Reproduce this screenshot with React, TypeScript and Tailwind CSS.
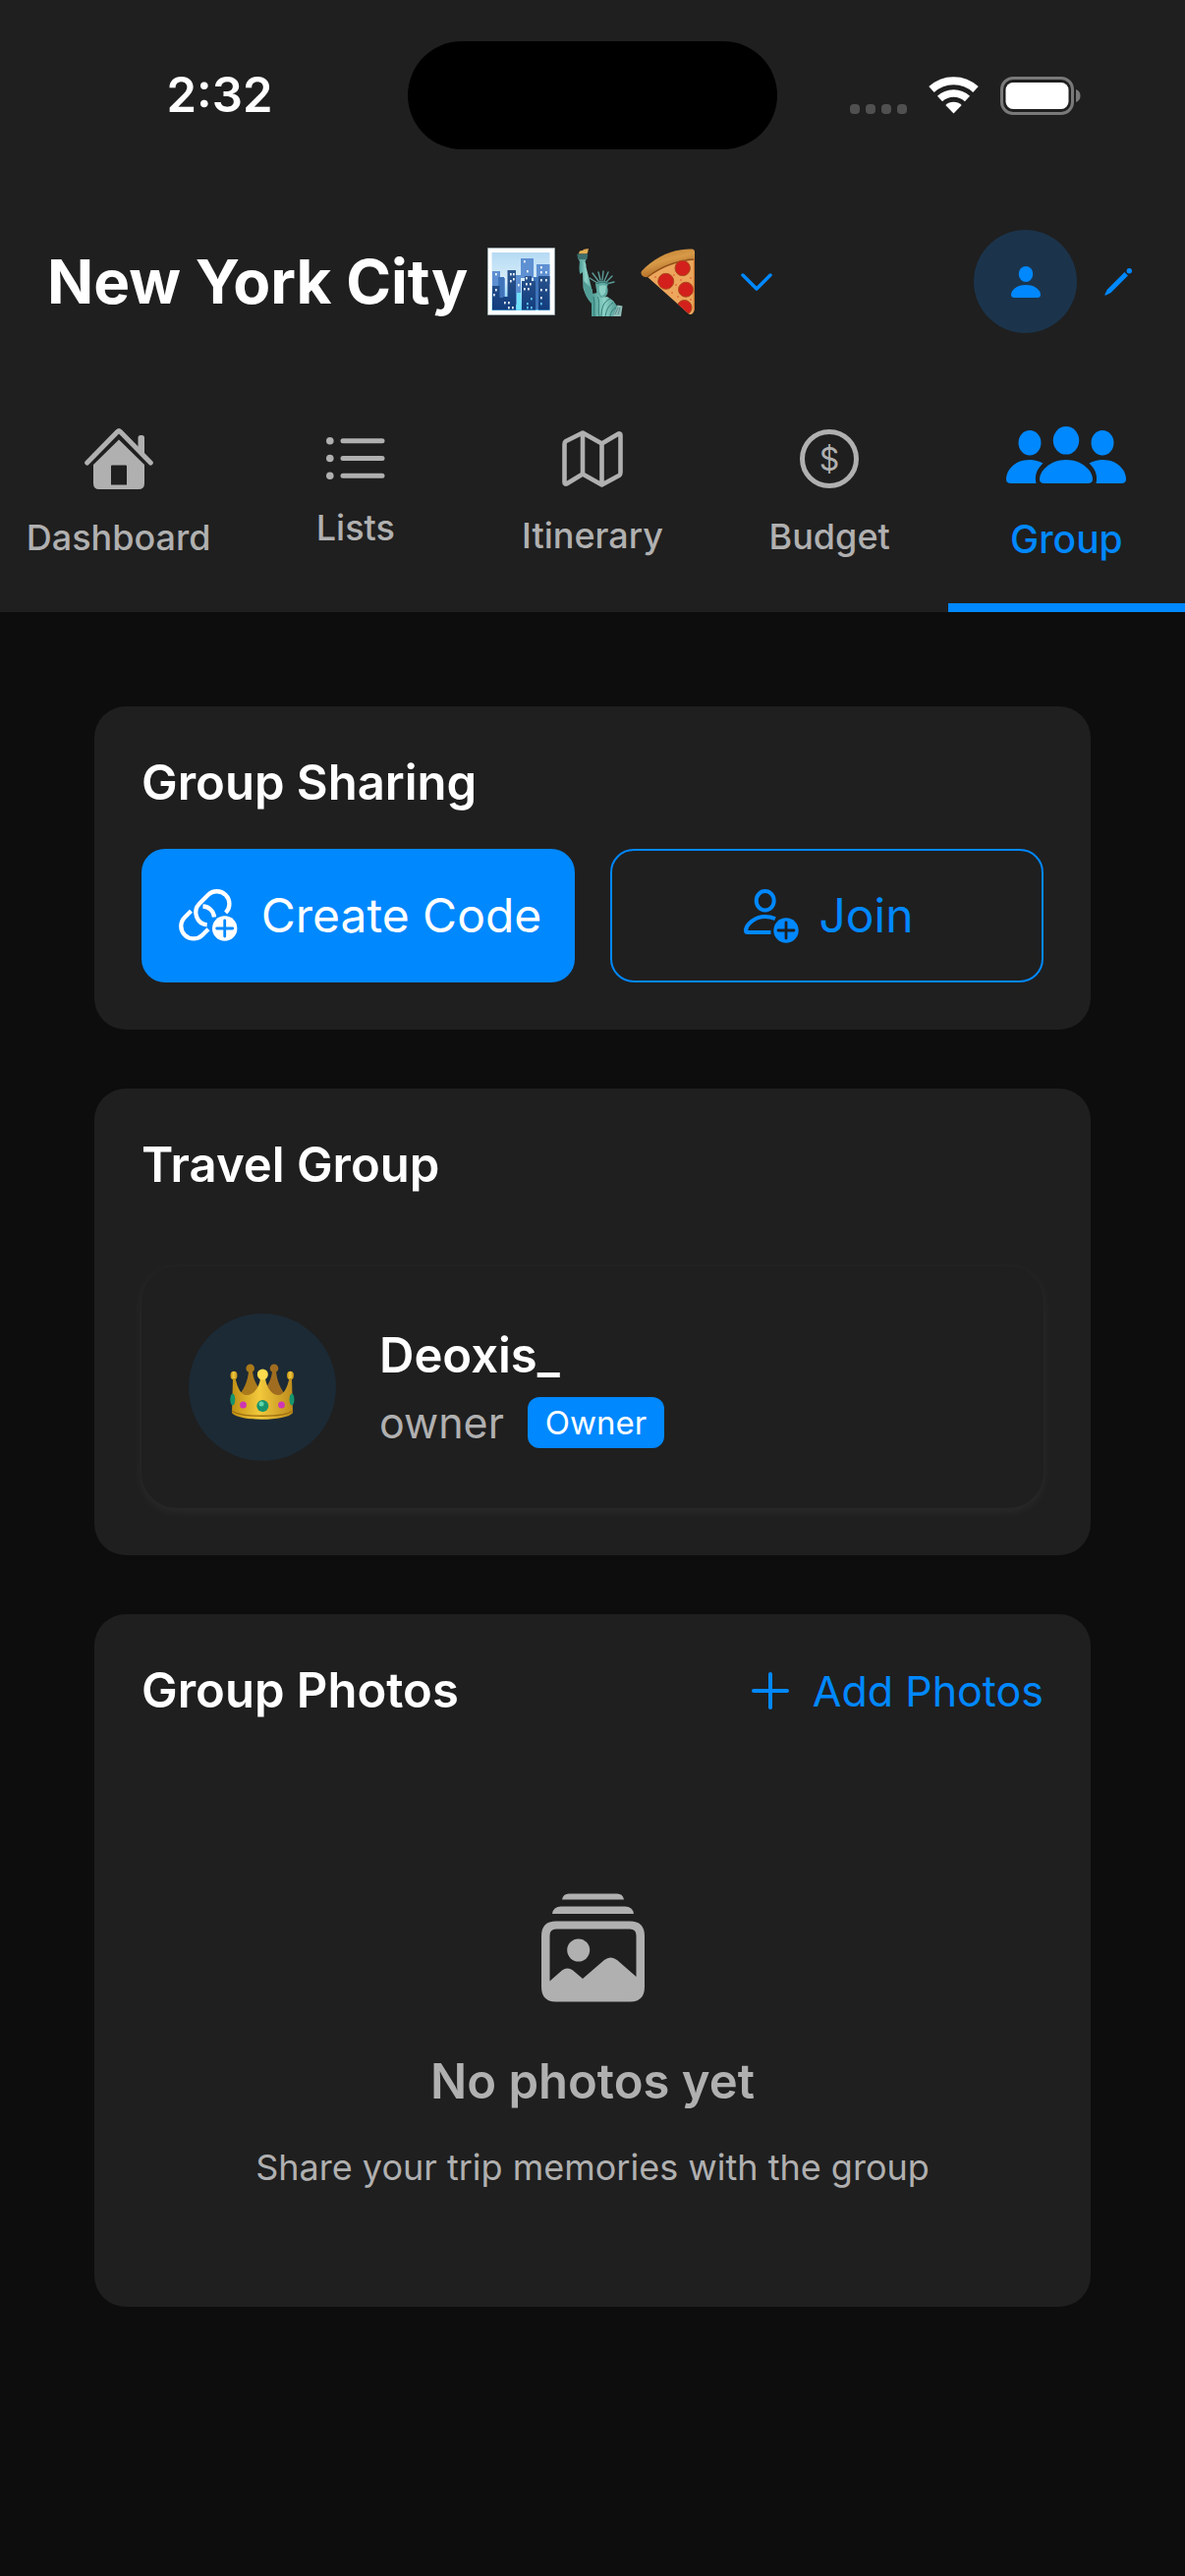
import type { ReactNode } from 'react';

const tabs = [
  { label: 'Dashboard', icon: <HouseIcon /> },
  { label: 'Lists', icon: <ListIcon /> },
  { label: 'Itinerary', icon: <MapIcon /> },
  { label: 'Budget', icon: <DollarIcon /> },
  { label: 'Group', icon: <GroupIcon />, active: true },
];

/* ---------- Status bar icons ---------- */

function WifiIcon() {
  return (
    <svg width="51" height="38" viewBox="0 0 51 38" fill="none" stroke="#fff" aria-hidden="true">
      <path d="M3 13a33 33 0 0 1 45 0" strokeWidth="8" />
      <path d="M11.5 22.5a20.5 20.5 0 0 1 28 0" strokeWidth="7.5" />
      <path d="M25.5 37.5 17.3 29a12 12 0 0 1 16.4 0Z" fill="#fff" stroke="none" />
    </svg>
  );
}

function BatteryIcon() {
  return (
    <svg width="82" height="39" viewBox="0 0 82 39" fill="none" aria-hidden="true">
      <rect x="1.5" y="1.5" width="72" height="36" rx="11.5" stroke="#797979" strokeWidth="3" />
      <rect x="5.5" y="6" width="64" height="27" rx="7.5" fill="#fff" />
      <path d="M77 13c3 1 4.5 3.5 4.5 6.5S80 25 77 26Z" fill="#797979" />
    </svg>
  );
}

/* ---------- Emoji drawings ---------- */

function CityEmoji() {
  const windows = [
    [37, 13], [40, 23], [54, 19], [59, 24], [54, 24], [23, 26], [26, 26], [23, 33], [26, 31],
    [8, 26], [8, 42], [6, 47], [31, 37], [39, 30], [39, 36], [43, 36], [37, 41], [41, 41],
    [54, 32], [59, 32], [54, 42], [59, 42], [54, 50], [54, 56], [44, 51], [40, 56], [17, 55],
    [21, 55], [21, 60], [25, 60], [40, 60], [44, 60],
  ];
  return (
    <svg width="69" height="69" viewBox="0 0 69 69" role="img" aria-label="cityscape">
      <defs>
        <linearGradient id="sky" x1="0" y1="0" x2="0" y2="1">
          <stop offset="0" stopColor="#b5daf3" />
          <stop offset="0.5" stopColor="#d8eefb" />
          <stop offset="1" stopColor="#5cc6f2" />
        </linearGradient>
        <linearGradient id="tower" x1="0" y1="0" x2="0" y2="1">
          <stop offset="0" stopColor="#2c568f" />
          <stop offset="1" stopColor="#123c7c" />
        </linearGradient>
      </defs>
      <rect width="69" height="69" fill="#6f8388" />
      <rect x="0.7" y="0.7" width="67.6" height="67.6" fill="#fff" />
      <rect x="4.5" y="5" width="59" height="59" fill="url(#sky)" />
      <path d="M5 24h8v7h5v20h-13zM34 11h13v20H34zM50 17h13.5v20H50zM29 28h5v30h-5z" fill="#5e90d2" />
      <path d="M11 30h6v30h-6zM47 30h5v33h-5z" fill="#3f74ba" />
      <path d="M5 39h7.500v12H16v-1h4.500V23H29v40.500H5zM35 34h3v-5h7v5h4v29.500H35zM52 29h11.500v34.500H52z" fill="url(#tower)" />
      <rect x="30" y="46" width="4" height="17.5" fill="#6fe0fb" />
      {windows.map(([x, y]) => (
        <rect key={`${x}-${y}`} x={x} y={y} width="1.7" height="2.4" fill={y > 50 && x % 2 === 0 ? '#5cc3f5' : '#eef7ff'} />
      ))}
    </svg>
  );
}

function StatueEmoji() {
  return (
    <svg width="71" height="70" viewBox="0 0 71 70" role="img" aria-label="Statue of Liberty">
      <defs>
        <linearGradient id="robe" x1="0" y1="0" x2="1" y2="0">
          <stop offset="0" stopColor="#4b9a92" />
          <stop offset="0.45" stopColor="#8ed3c8" />
          <stop offset="1" stopColor="#438d87" />
        </linearGradient>
      </defs>
      <path d="M16 6.500c0-3 2-4 4-3.500 1-2 3-1 6-2-1 2 0 4-2 5.500Z" fill="#e0ad52" />
      <path d="M14.300 6.500h11l-.8 5.500h-9.400Z" fill="#3d6f6e" />
      <path d="M16 12h7.500l-1 3h-5.500Z" fill="#68aaa3" />
      <path d="M17 14c4-2 7 1 6.500 6L27 33l3 12c1 5 3 10 0 12-5-4-8-11-9.500-16L20 25l-2.500 2c-1.500-3-1-9-.5-13Z" fill="url(#robe)" />
      <path d="M21 34c3 3 6 5 9 9l-1 14c-4-4-9-12-8-23Z" fill="#529d95" />
      <g stroke="#5c9c98" strokeWidth="1.4" strokeLinecap="round">
        <path d="M35 36 27 31M36 34l-6-8M38 33l-2-8M40 33l1-9M42 34l4-9M44 35l6-6M44 37l8-2" />
      </g>
      <path d="M33 37c1-3 9-5 13-1l-1 4c2 6-1 11-5 12-4-1-6-4-6-9Z" fill="#5fa9a1" />
      <path d="M37 39c3-1 5-1 7 0l-1 7c-1 2-3 3-4 3-2-3-3-6-2-10Z" fill="#8bcfc4" />
      <path d="M34 37c3-2 8-3 12 0" stroke="#3b7775" strokeWidth="1.5" fill="none" />
      <path d="M29 70V57l1-10 5-1 3 5 7-1 6 4 5 7 2 9Z" fill="url(#robe)" />
      <path d="M31 50c2 8 0 14 1 20M35 50c3 4 0 14 2 20M48 52c-7 3-9 10-9 18M51 56c-6 4-7 9-8 14M54 61c-4 2-6 6-6 9" stroke="#337b77" strokeWidth="1" fill="none" />
      <path d="m51 70 4.500-11.500 5 1L59 70Z" fill="#8fbdb8" />
      <path d="m53 68 3-7M56 68l2-7" stroke="#5b8e8b" strokeWidth="1" />
    </svg>
  );
}

function PizzaEmoji() {
  return (
    <svg width="57" height="69" viewBox="0 0 57 69" role="img" aria-label="pizza">
      <defs>
        <linearGradient id="crust" x1="0" y1="0" x2="0.5" y2="1">
          <stop offset="0" stopColor="#b9742a" />
          <stop offset="0.5" stopColor="#d79a48" />
          <stop offset="1" stopColor="#a9601d" />
        </linearGradient>
        <clipPath id="slice">
          <path d="M6 29C19 18 35 12 55 11v50q-1 9-6 6.500Z" />
        </clipPath>
      </defs>
      <path d="M6 29C19 18 35 12 55 11v50q-1 9-6 6.500Z" fill="#eca75d" />
      <path d="M1 24C14 10 32 1 52 1.500q3 0 3 3V11C36 12 20 20 7 30 3 31-1 27 1 24Z" fill="url(#crust)" />
      <path d="M7 30C20 20 36 13 55 12" stroke="#8f4f18" strokeWidth="1.5" fill="none" />
      <g clipPath="url(#slice)">
        <g fill="#d3201c" stroke="#a94a1c" strokeWidth="1">
          <circle cx="42.7" cy="21" r="7.7" />
          <circle cx="25.7" cy="34.3" r="8" />
          <circle cx="46" cy="42.7" r="7.5" />
          <circle cx="44.5" cy="61" r="7.5" />
        </g>
        <g fill="#e2703c">
          <circle cx="34" cy="28" r="1" />
          <circle cx="36" cy="38" r="1" />
          <circle cx="32" cy="46" r="1" />
          <circle cx="51" cy="31" r="1" />
          <circle cx="41" cy="33" r="1" />
          <circle cx="15" cy="30" r="1" />
          <circle cx="51" cy="53" r="1" />
          <circle cx="38" cy="50" r="1" />
        </g>
        <path d="M54.500 11v57" stroke="#c9762f" strokeWidth="1.5" />
      </g>
    </svg>
  );
}

function CrownEmoji() {
  return (
    <svg width="66" height="57" viewBox="0 0 66 57" role="img" aria-label="crown">
      <defs>
        <linearGradient id="gold" x1="0" y1="0" x2="1" y2="0">
          <stop offset="0" stopColor="#c08f14" />
          <stop offset="0.45" stopColor="#f3c93c" />
          <stop offset="1" stopColor="#bd8b1c" />
        </linearGradient>
      </defs>
      <g fill="#ab7a1b">
        <circle cx="20.7" cy="4.7" r="4.3" />
        <path d="M19 8h4c1 8 4 14 8 18l-8 14-16-6C14 28 18 18 19 8Z" />
      </g>
      <g fill="#a06d20">
        <circle cx="45" cy="4.7" r="4.3" />
        <path d="M43 8h4c1 10 5 20 12 26l-16 6-8-14c4-4 7-10 8-18Z" />
      </g>
      <g fill="url(#gold)">
        <ellipse cx="4" cy="12" rx="3.5" ry="4.2" />
        <ellipse cx="61.5" cy="12" rx="3.5" ry="4.2" />
        <path d="M3 15h2.500C8 25 11 32 17 32c8 0 13-9 14-17h5c1 8 6 17 13 17 6 0 9-7 11.500-17H63l1 35c-6 9-56 9-62 0Z" />
      </g>
      <circle cx="33.3" cy="11" r="5.5" fill="#ffdc4e" />
      <path d="M2 48c8 7 54 7 62 0" stroke="#9d7010" strokeWidth="1.3" fill="none" />
      <circle cx="33.3" cy="43" r="6" fill="#17946c" />
      <circle cx="32" cy="41" r="2.5" fill="#5fd6ac" />
      <ellipse cx="13.5" cy="42" rx="3.4" ry="3.6" fill="#cf35b4" />
      <ellipse cx="52.5" cy="42" rx="3.4" ry="3.6" fill="#cf35b4" />
      <ellipse cx="2.8" cy="36.5" rx="2.5" ry="6" fill="#17946c" />
      <ellipse cx="63" cy="36.5" rx="2.5" ry="6" fill="#17946c" />
    </svg>
  );
}

/* ---------- Tab icons ---------- */

function HouseIcon() {
  return (
    <svg width="70" height="62" viewBox="0 0 70 62" fill="currentColor" aria-hidden="true">
      <path d="M54.500 24V9.500q0-2.500 2.500-2.500h1.500Q61 7 61 9.500V28Z" />
      <path d="M2.700 35 33.500 3.500q1.500-1.500 3 0L67.300 35" fill="none" stroke="currentColor" strokeWidth="5" strokeLinecap="round" />
      <path fillRule="evenodd" d="M35 11.500 61 37v19q0 6-6 6H15q-6 0-6-6V37ZM28 37.500q-1 0-1 1V57.500h16V38.500q0-1-1-1Z" />
    </svg>
  );
}

function ListIcon() {
  return (
    <svg width="60" height="43" viewBox="0 0 60 43" fill="currentColor" aria-hidden="true">
      <circle cx="3.8" cy="3.8" r="3.8" />
      <circle cx="3.8" cy="21.5" r="3.8" />
      <circle cx="3.8" cy="39.2" r="3.8" />
      <path d="M17 3.800h40M17 21.500h40M17 39.200h40" stroke="currentColor" strokeWidth="5" strokeLinecap="round" />
    </svg>
  );
}

function MapIcon() {
  return (
    <svg width="62" height="58" viewBox="0 0 62 58" fill="none" stroke="currentColor" strokeWidth="4.6" strokeLinejoin="round" aria-hidden="true">
      <path d="M2.500 14q0-2 1.500-3L21 2.500 40.500 13.500 57 3.700q2.500-1 2.500 1.300v38q0 2-1.500 3L40.500 55.500 21 44.500 5 54.300q-2.500 1-2.500-1.300ZM21 2.500v42M40.500 13.500v42" />
    </svg>
  );
}

function DollarIcon() {
  return (
    <svg width="60" height="60" viewBox="0 0 60 60" aria-hidden="true">
      <circle cx="30" cy="30" r="27.5" fill="none" stroke="currentColor" strokeWidth="5" />
      <text x="30" y="41.5" textAnchor="middle" fontSize="32" fill="currentColor">$</text>
    </svg>
  );
}

function GroupIcon() {
  return (
    <svg width="122" height="66" viewBox="0 0 122 66" fill="currentColor" aria-hidden="true">
      <ellipse cx="61" cy="14.3" rx="13.2" ry="14.3" />
      <ellipse cx="24" cy="16.7" rx="11.5" ry="12.7" />
      <ellipse cx="98" cy="16.7" rx="11.5" ry="12.7" />
      <path d="M39 58q-5 0-5-4c0-9 11-20 27-20s27 11 27 20q0 4-5 4Z" />
      <path d="M5 58q-5 0-5-4c0-9 8-20 24-20 5 0 9 1.300 13.500 3.500C31.500 43 28.500 50 30.500 58Z" />
      <path d="M117 58q5 0 5-4c0-9-8-20-24-20-5 0-9 1.300-13.500 3.500C90.500 43 93.500 50 91.500 58Z" />
    </svg>
  );
}

/* ---------- Action icons ---------- */

function LinkPlusIcon() {
  return (
    <svg width="60" height="54" viewBox="0 0 60 54" fill="none" stroke="currentColor" strokeWidth="4.3" aria-hidden="true">
      <path d="M47.700 24A12.700 12.700 0 0 0 29.700 6L21 14.700A12.700 12.700 0 0 0 28.700 36.300" />
      <path d="M12.500 22.200 6 28.700A12.700 12.700 0 0 0 24 46.700l6-6" />
      <path d="M24.500 17.500A12 12 0 0 1 36 28.500" />
      <circle cx="46.7" cy="40" r="12.7" fill="currentColor" stroke="none" />
      <path d="M46.700 32v16M38.700 40h16" stroke="#0088ff" strokeWidth="2.8" strokeLinecap="round" />
    </svg>
  );
}

function PersonPlusIcon() {
  return (
    <svg width="56" height="55" viewBox="0 0 56 55" fill="none" stroke="currentColor" strokeWidth="4" aria-hidden="true">
      <ellipse cx="21.7" cy="11.7" rx="9" ry="9.7" />
      <path d="M32 30.200C28.500 28.700 25 28 21.700 28 11 28 2 36 2 42.500q0 1.500 2 1.500h23.500" />
      <circle cx="43" cy="42" r="12.7" fill="currentColor" stroke="none" />
      <path d="M43 34v16M35 42h16" stroke="#1f1f1f" strokeWidth="2.8" strokeLinecap="round" />
    </svg>
  );
}

function PhotoStackIcon() {
  return (
    <svg width="105" height="111" viewBox="0 0 105 111" fill="currentColor" aria-hidden="true">
      <path d="M21 6.500q1-6 7-6h49q6 0 7 6ZM11 21q1-7.500 9-7.500h65q8 0 9 7.500Z" />
      <path fillRule="evenodd" d="M15 28.500h75q15 0 15 15v52q0 15-15 15H15q-15 0-15-15v-52q0-15 15-15Zm0 8q-6.500 0-6.500 6.500v46.500L21 78.500q5.500-4 11 0l10 8.500 22-19q6.500-5 13 0L96.500 85V43q0-6.500-6.500-6.500Z" />
      <circle cx="37.7" cy="58" r="11.5" />
    </svg>
  );
}

/* ---------- Layout ---------- */

function Card({ children }: { children: ReactNode }) {
  return <section className="rounded-[32px] bg-[#1f1f1f] p-12">{children}</section>;
}

function CardTitle({ children }: { children: ReactNode }) {
  return <h2 className="text-[49px] leading-[60px] font-semibold text-white">{children}</h2>;
}

function StatusBar() {
  return (
    <div className="grid grid-cols-[1fr_376px_1fr] items-center pt-[42px]">
      <span className="pl-8 text-center text-[49px] leading-[60px] font-semibold">2:32</span>
      <div className="h-[110px] rounded-full bg-black" />
      <div className="flex items-center justify-center gap-[22px] pr-8">
        <div className="flex gap-[6px] pt-7">
          <i className="size-[10px] rounded-[4px] bg-[#505050]" />
          <i className="size-[10px] rounded-[4px] bg-[#505050]" />
          <i className="size-[10px] rounded-[4px] bg-[#505050]" />
          <i className="size-[10px] rounded-[4px] bg-[#505050]" />
        </div>
        <WifiIcon />
        <BatteryIcon />
      </div>
    </div>
  );
}

export default function App() {
  return (
    <div className="min-h-screen bg-[#0d0d0d] font-['Inter',sans-serif] text-white">
      <header className="bg-[#1f1f1f]">
        <StatusBar />

        <div className="mt-[82px] flex items-center justify-between pr-[50px] pl-12">
          <div className="flex items-center">
            <h1 className="flex items-center gap-2 text-[62px] leading-[72px] font-bold whitespace-nowrap">
              <span className="mr-3">New York City</span>
              <CityEmoji />
              <StatueEmoji />
              <PizzaEmoji />
            </h1>
            <button type="button" aria-label="Switch trip" className="ml-8 p-3 text-[#0088ff]">
              <svg width="34" height="20" viewBox="0 0 34 20" fill="none" stroke="currentColor" strokeWidth="3.5" strokeLinecap="round" strokeLinejoin="round">
                <path d="m3 3 14 14L31 3" />
              </svg>
            </button>
          </div>
          <div className="flex items-center gap-6">
            <button type="button" aria-label="Profile" className="flex size-[105px] items-center justify-center rounded-full bg-[#1b344c] text-[#0088ff]">
              <svg width="30" height="32" viewBox="0 0 30 32" fill="currentColor">
                <ellipse cx="15" cy="8" rx="7.2" ry="8" />
                <path d="M3.500 32Q0 32 0 29c0-5 6-10 15-10s15 5 15 10q0 3-3.500 3Z" />
              </svg>
            </button>
            <button type="button" aria-label="Edit trip" className="flex w-9 justify-center text-[#0088ff]">
              <svg width="28" height="28" viewBox="0 0 28 28" fill="currentColor">
                <circle cx="25.3" cy="2.7" r="2.7" />
                <path d="m20.500 4 3.500 3.500L6.500 25l-5 2.500q-1.500.5-1-1L3 21.500Z" />
              </svg>
            </button>
          </div>
        </div>

        <nav className="mt-[34px] grid grid-cols-5">
          {tabs.map((tab) => (
            <button
              key={tab.label}
              type="button"
              className={`relative flex h-[250px] flex-col items-center justify-center gap-[31px] pt-1 ${
                tab.active ? 'text-[39px] text-[#0088ff]' : 'text-[36px] text-[#b0b0b0]'
              }`}
            >
              {tab.icon}
              <span className="leading-9 font-medium">{tab.label}</span>
              {tab.active && <span className="absolute inset-x-0 bottom-0 h-[9px] bg-[#0088ff]" />}
            </button>
          ))}
        </nav>
      </header>

      <main className="flex flex-col gap-[60px] p-24">
        <Card>
          <CardTitle>Group Sharing</CardTitle>
          <div className="mt-[37px] grid grid-cols-2 gap-9 text-[48px] leading-[60px]">
            <button type="button" className="flex h-[136px] items-center justify-center gap-6 rounded-3xl bg-[#0088ff] pl-1 text-white">
              <LinkPlusIcon />
              Create Code
            </button>
            <button type="button" className="flex h-[136px] items-center justify-center gap-5 rounded-3xl border-2 border-[#0088ff] pl-1 text-[#0088ff]">
              <PersonPlusIcon />
              Join
            </button>
          </div>
        </Card>

        <Card>
          <CardTitle>Travel Group</CardTitle>
          <div className="mt-[73px] flex items-center gap-11 rounded-[36px] bg-[#1f1f1f] p-12 shadow-[0_3px_12px_rgba(255,255,255,0.06)]">
            <div className="flex size-[150px] items-center justify-center rounded-full bg-[#1c2a35] pt-2">
              <CrownEmoji />
            </div>
            <div>
              <p className="text-[49px] leading-[60px] font-semibold">Deoxis_</p>
              <div className="mt-3 flex items-center gap-6">
                <span className="text-[43px] leading-[52px] text-[#b0b0b0]">owner</span>
                <span className="rounded-xl bg-[#0088ff] px-[18px] text-[33px] leading-[52px]">Owner</span>
              </div>
            </div>
          </div>
        </Card>

        <Card>
          <div className="flex items-center justify-between">
            <CardTitle>Group Photos</CardTitle>
            <button type="button" className="flex items-center gap-6 text-[43px] leading-[52px] text-[#0088ff]">
              <svg width="38" height="38" viewBox="0 0 38 38" fill="none" stroke="currentColor" strokeWidth="4" strokeLinecap="round" aria-hidden="true">
                <path d="M19 2v34M2 19h34" />
              </svg>
              Add Photos
            </button>
          </div>
          <div className="flex flex-col items-center pt-[176px] pb-[70px] text-[#b0b0b0]">
            <PhotoStackIcon />
            <p className="mt-[51px] text-[49px] leading-[60px] font-semibold">No photos yet</p>
            <p className="mt-[33px] text-[36px] leading-[48px]">Share your trip memories with the group</p>
          </div>
        </Card>
      </main>
    </div>
  );
}
